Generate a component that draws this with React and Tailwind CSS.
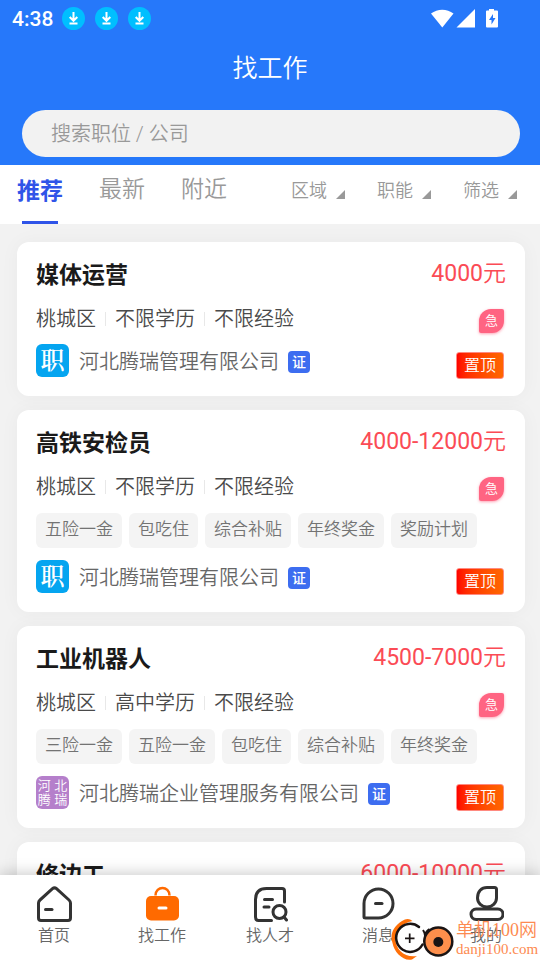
import React, { useState } from "react";

const jobs = [
  {
    title: "媒体运营",
    salary: "4000",
    info: ["桃城区", "不限学历", "不限经验"],
    tags: [],
    company: "河北腾瑞管理有限公司",
    logo: "job",
  },
  {
    title: "高铁安检员",
    salary: "4000-12000",
    info: ["桃城区", "不限学历", "不限经验"],
    tags: ["五险一金", "包吃住", "综合补贴", "年终奖金", "奖励计划"],
    company: "河北腾瑞管理有限公司",
    logo: "job",
  },
  {
    title: "工业机器人",
    salary: "4500-7000",
    info: ["桃城区", "高中学历", "不限经验"],
    tags: ["三险一金", "五险一金", "包吃住", "综合补贴", "年终奖金"],
    company: "河北腾瑞企业管理服务有限公司",
    logo: "name",
  },
  {
    title: "修边工",
    salary: "6000-10000",
    info: [],
    tags: [],
    company: "",
    logo: "job",
  },
];

const tabs = ["推荐", "最新", "附近"];
const filters = ["区域", "职能", "筛选"];

function DownloadDot() {
  return (
    <svg className="size-[23px]" viewBox="0 0 23 23" fill="none">
      <circle cx="11.5" cy="11.5" r="11.5" fill="#00bfff" />
      <path
        d="M11.5 5v8.500M7.700 10l3.800 3.800 3.800-3.800M7.500 16.500h8"
        stroke="#fff"
        strokeWidth="2"
      />
    </svg>
  );
}

function StatusBar() {
  return (
    <div className="flex h-[37px] items-center pr-[42px] pl-3">
      <span className="w-[50px] text-[21px] leading-6 font-medium">4:38</span>
      <div className="flex gap-[10px]">
        <DownloadDot />
        <DownloadDot />
        <DownloadDot />
      </div>
      <svg className="ml-auto h-5 w-[67px]" viewBox="0 0 67 20" fill="#fff">
        <path d="M0 4.500C6.500-.6 16-.6 22.500 4.500L11.300 18.500z" />
        <path d="M44 0v18.500H25.500z" />
        <path
          fillRule="evenodd"
          d="M58 0h5v1.500h3q1 0 1 1V17.500q0 1-1 1H56q-1 0-1-1V2.500q0-1 1-1h2zM62 5l-4 6h2.500v4.500l4-6.500H62z"
        />
      </svg>
    </div>
  );
}

function CompanyLogo({ type }) {
  if (type === "name") {
    return (
      <span className="grid size-[33px] shrink-0 grid-cols-2 place-items-center rounded-md bg-[#b57fcb] py-[3px] text-[13px] leading-[13px] text-white">
        <span>河</span>
        <span>北</span>
        <span>腾</span>
        <span>瑞</span>
      </span>
    );
  }
  return (
    <span className="flex size-[33px] shrink-0 items-center justify-center rounded-md bg-[#05a5f0] font-['Noto_Serif_CJK_SC','Noto_Sans_CJK_SC',serif] text-2xl leading-7 font-semibold text-white">
      <span className="pb-1">职</span>
    </span>
  );
}

function JobCard({ job }) {
  const hasTags = job.tags.length > 0;
  return (
    <article className="min-h-[154px] shrink-0 rounded-xl bg-white px-[19px] pt-[14px] pb-[17px] shadow-[0_0_20px_rgba(0,0,0,0.04)]">
      <div className="flex items-start justify-between text-[23px] leading-9">
        <h2 className="pt-[2px] font-bold text-[#1a1a1a]">{job.title}</h2>
        <p className="text-[#fb4b55]">
          <span className="font-normal">{job.salary}</span>元
        </p>
      </div>

      {job.info.length > 0 && (
        <div className="mt-[9px] flex h-[30px] items-end justify-between pr-[2px]">
          <ul className="flex items-center text-xl leading-7 text-[#4a4a4a]">
            {job.info.map((item, i) => (
              <li key={item} className="flex items-center">
                {i > 0 && <span className="mx-[9px] h-[14px] w-px bg-[#e8e8e8]" />}
                {item}
              </li>
            ))}
          </ul>
          <span className="flex h-6 w-[25px] items-center justify-center rounded-[2px] rounded-tl-xl rounded-br-xl bg-[#ff6482] text-[13px] leading-5 text-white shadow-[0_1px_3px_rgba(255,100,130,0.6)]">
            急
          </span>
        </div>
      )}

      {hasTags && (
        <ul className="mt-3 flex gap-[7px]">
          {job.tags.map((tag) => (
            <li
              key={tag}
              className="h-[35px] rounded-md bg-[#f4f4f4] px-[9px] text-[17px] leading-8 whitespace-nowrap text-[#737373]"
            >
              {tag}
            </li>
          ))}
        </ul>
      )}

      {job.company && (
        <div className={hasTags ? "mt-3 flex items-start" : "mt-[11px] flex items-start"}>
          <CompanyLogo type={job.logo} />
          <span className="ml-[10px] pt-[2px] text-xl leading-[33px] text-[#666]">{job.company}</span>
          <span className="mt-[7px] ml-[9px] flex size-[22px] items-center justify-center rounded bg-[#3d6df0] text-sm leading-5 font-medium text-white">
            证
          </span>
          <span className="mt-2 mr-[2px] ml-auto flex h-[27px] w-12 items-center justify-center rounded-[3px] border border-[#ff8a80] bg-linear-to-r from-[#ff0000] to-[#ff6600] text-base leading-6 text-white">
            置顶
          </span>
        </div>
      )}
    </article>
  );
}

function NavIcon({ name }) {
  const stroke = {
    fill: "none",
    stroke: "#333",
    strokeWidth: 3,
    strokeLinecap: "round",
    strokeLinejoin: "round",
  };
  return (
    <svg className="h-9 w-9" viewBox="0 0 36 36">
      {name === "home" && (
        <g {...stroke}>
          <path d="M16.500 2.700q2-1.700 4 0L33 14q1.500 1.300 1.500 3v15q0 2.500-2.500 2.500H5Q2.500 34.500 2.500 32V17q0-1.700 1.500-3z" />
          <path d="M9.500 23.500h6.500" />
        </g>
      )}
      {name === "job" && (
        <>
          <path
            d="M11.500 9.500C11.500-.5 25.500-.5 25.500 9.500"
            fill="none"
            stroke="#ff6a00"
            strokeWidth="2.500"
          />
          <rect x="2" y="10" width="33" height="24.500" rx="5" fill="#ff6a00" />
          <path d="M15 22h7" stroke="#fff" strokeWidth="3" strokeLinecap="round" />
        </>
      )}
      {name === "talent" && (
        <g {...stroke}>
          <path d="M32.500 16V5q0-2.500-2.500-2.500H14.500Q3.500 2.500 3.500 13.500v17.500q0 3.500 3 3.500h13" />
          <path d="M12.500 13.500h8M12 21h5" />
          <circle cx="27.500" cy="26" r="6.500" />
          <path d="M32 31l2.500 3" />
        </g>
      )}
      {name === "message" && (
        <g {...stroke}>
          <path d="M4 31V17.500a14.500 14.500 0 1 1 14.500 14.500H5.500Q4 32 4 31z" />
          <path d="M15.500 17.500h6.500" />
        </g>
      )}
      {name === "mine" && (
        <g {...stroke}>
          <path d="M26.500 1.500q2 0 2 2v8.500a9.500 9 0 1 1-19 0C9.500 5.500 13.500 1.500 19 1.500z" />
          <rect x="3" y="23" width="32" height="10.500" rx="5.200" />
        </g>
      )}
    </svg>
  );
}

const navItems = [
  { name: "home", label: "首页" },
  { name: "job", label: "找工作" },
  { name: "talent", label: "找人才" },
  { name: "message", label: "消息" },
  { name: "mine", label: "我的" },
];

function SiteMark() {
  return (
    <div className="pointer-events-none absolute right-0 bottom-0 z-20 flex items-end">
      <svg className="h-[42px] w-[65px]" viewBox="0 0 65 42" fill="none">
        <path
          d="M21.500 3Q17-1 11 3C1 9-1 18 1.500 25 3 34 12 43.500 21 41.500l5-3.500C14 40 4.500 32 4.500 21 4.500 12 11 5 21.500 3z"
          fill="#ff7008"
        />
        <circle cx="18.700" cy="20.300" r="14" fill="#fff" />
        <path
          d="M28 9A14 14 0 1 0 31.500 26.500"
          stroke="#1a1414"
          strokeWidth="2.500"
          strokeLinecap="round"
        />
        <path d="M14 20.300h9.500M18.700 15.500v9.500" stroke="#1a1414" strokeWidth="1.700" />
        <path d="M32 12q3.500 5 1 12M38.500 11q-3.500 2-4.500 6" stroke="#1a1414" strokeWidth="2" />
        <circle cx="47.300" cy="23.500" r="14" fill="#fd8f4c" stroke="#1a1414" strokeWidth="2.500" />
        <circle cx="47.300" cy="24" r="5" fill="#1a1414" />
      </svg>
      <div className="w-[84px] pb-[2px] font-['Liberation_Serif','Noto_Sans_CJK_SC',serif] text-[#fd8a50]">
        <p className="text-lg leading-5 whitespace-nowrap">单机100网</p>
        <p className="text-[15px] leading-[18px]">danji100.com</p>
      </div>
    </div>
  );
}

export default function App() {
  const [active, setActive] = useState("推荐");

  return (
    <div className="relative flex h-screen flex-col overflow-hidden bg-[#f2f2f2] font-[Roboto,'Noto_Sans_CJK_SC',sans-serif] font-[350]">
      <header className="shrink-0 bg-[#2678fa] pb-2 text-white">
        <StatusBar />
        <h1 className="pt-[14px] text-center text-[25px] leading-9">找工作</h1>
        <div className="mt-[23px] mr-5 ml-[22px]">
          <input
            type="search"
            aria-label="搜索职位 / 公司"
            placeholder="搜索职位 / 公司"
            className="block h-[47px] w-full rounded-full bg-[#f2f2f2] pr-6 pl-[29px] text-xl text-[#333] outline-none placeholder:text-[#999]"
          />
        </div>
      </header>

      <div className="flex h-[59px] shrink-0 items-start justify-between bg-white pr-[23px] pl-[17px]">
        <div className="flex h-full gap-9">
          {tabs.map((tab) => (
            <button
              key={tab}
              type="button"
              onClick={() => setActive(tab)}
              className={
                active === tab
                  ? "flex flex-col items-center justify-between pt-[9px] text-[23px] leading-9 font-bold text-[#2f54e8] after:h-[3px] after:w-9 after:bg-[#2f54e8]"
                  : "flex flex-col pt-[7px] text-[23px] leading-9 text-[#999]"
              }
            >
              {tab}
            </button>
          ))}
        </div>
        <div className="flex gap-8 pt-[11px]">
          {filters.map((filter) => (
            <button
              key={filter}
              type="button"
              className="flex items-center gap-[9px] text-lg leading-[30px] text-[#999]"
            >
              {filter}
              <svg className="mt-[7px] size-[9px]" viewBox="0 0 9 9" fill="#999">
                <path d="M9 0v9H0z" />
              </svg>
            </button>
          ))}
        </div>
      </div>

      <main className="flex min-h-0 flex-1 flex-col gap-[14px] overflow-hidden pt-[18px] pr-[15px] pl-[17px]">
        {jobs.map((job) => (
          <JobCard key={job.title} job={job} />
        ))}
      </main>

      <nav className="z-10 grid h-[85px] shrink-0 grid-cols-5 bg-white shadow-[0_-2px_14px_rgba(0,0,0,0.2)]">
        {navItems.map((item) => (
          <a
            key={item.name}
            href={`#${item.name}`}
            className="flex flex-col items-center gap-[2px] pt-[11px] text-base leading-6 text-[#666]"
          >
            <NavIcon name={item.name} />
            {item.label}
          </a>
        ))}
      </nav>

      <SiteMark />
    </div>
  );
}
